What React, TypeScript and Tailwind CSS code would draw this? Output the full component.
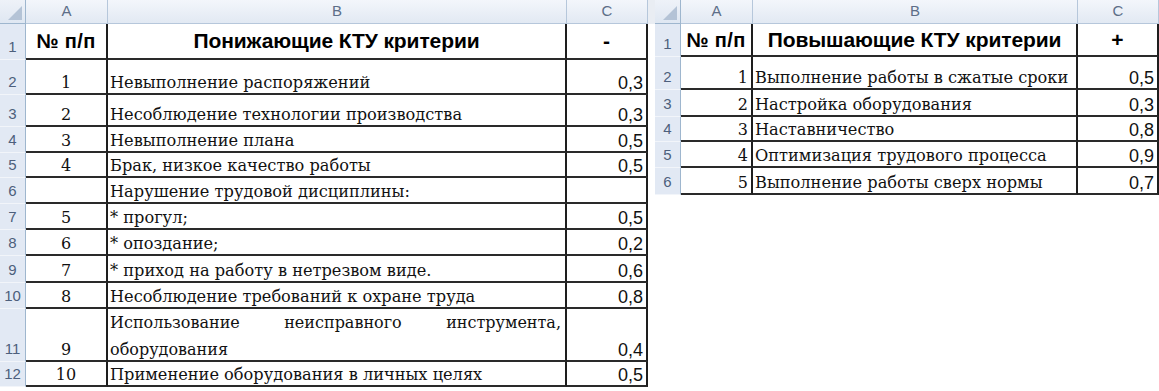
import React from "react";

type Cell = { text?: React.ReactNode; kind: "num" | "text" | "val" | "hdr" | "hnum" | "hsign" | "just"; align?: "left" | "center" | "right" };

const serif = "font-['DejaVu_Serif',serif]";
const sans = "font-['Liberation_Sans',sans-serif]";

function CornerCell() {
  return (
    <div className="relative bg-gradient-to-b from-[#eef2f8] to-[#dfe7f2] border-r border-b border-[#9eb6ce]">
      <svg className="absolute right-[3px] bottom-[3px]" width="14" height="14" viewBox="0 0 14 14">
        <polygon points="14,0 14,14 0,14" fill="#b4c3d6" />
      </svg>
    </div>
  );
}

function ColHeader({ label }: { label: string }) {
  return (
    <div className={`flex items-center justify-center bg-gradient-to-b from-[#f3f6fb] to-[#e2e9f3] border-r border-b border-[#b6c7db] text-[15px] text-[#5d6e88] ${sans}`}>
      {label}
    </div>
  );
}

function RowHeader({ n }: { n: number }) {
  return (
    <div className={`flex items-end justify-center pb-[2px] bg-[#e2e9f4] border-r border-[#9eb6ce] border-b border-b-[#f2f5fa] text-[15px] text-[#4d5f7c] leading-[20px] ${sans}`}>
      {n}
    </div>
  );
}

function DataCell({ cell }: { cell: Cell }) {
  const base = "flex bg-white border-r-2 border-r-[#1e1e1e] border-b-2 border-b-[#2a2a2a] overflow-hidden";
  if (cell.kind === "hdr") {
    return (
      <div className={`${base} items-center justify-center font-bold text-[21px] text-black ${sans} tracking-[-0.1px]`}>
        {cell.text}
      </div>
    );
  }
  if (cell.kind === "hnum") {
    return (
      <div className={`${base} items-center justify-center font-bold text-[20px] text-black ${sans} tracking-[0.4px]`}>
        {cell.text}
      </div>
    );
  }
  if (cell.kind === "hsign") {
    return (
      <div className={`${base} items-center justify-center font-bold text-[21px] text-black ${sans}`}>
        {cell.text}
      </div>
    );
  }
  if (cell.kind === "val") {
    return (
      <div className={`${base} items-end justify-end pr-[3px] text-[18px] leading-[20px] text-[#111] ${sans}`}>
        {cell.text}
      </div>
    );
  }
  if (cell.kind === "num") {
    const j = cell.align === "right" ? "justify-end pr-[3px]" : "justify-center";
    return (
      <div className={`${base} items-end ${j} text-[16px] leading-[20px] text-[#111] ${serif}`}>
        {cell.text}
      </div>
    );
  }
  if (cell.kind === "just") {
    return (
      <div className={`${base} flex-col justify-end pl-[2px] pr-[4px] text-[16px] leading-[27px] text-[#111] ${serif}`}>
        <div className="translate-y-[3px]">{cell.text}</div>
      </div>
    );
  }
  return (
    <div className={`${base} items-end pl-[2px] text-[16.2px] leading-[20px] text-[#111] whitespace-nowrap ${serif}`}>
      {cell.text}
    </div>
  );
}

const leftRows: Cell[][] = [
  [
    { kind: "hnum", text: "№ п/п" },
    { kind: "hdr", text: "Понижающие КТУ критерии" },
    { kind: "hsign", text: "-" },
  ],
  [{ kind: "num", text: "1" }, { kind: "text", text: "Невыполнение распоряжений" }, { kind: "val", text: "0,3" }],
  [{ kind: "num", text: "2" }, { kind: "text", text: "Несоблюдение технологии производства" }, { kind: "val", text: "0,3" }],
  [{ kind: "num", text: "3" }, { kind: "text", text: "Невыполнение плана" }, { kind: "val", text: "0,5" }],
  [{ kind: "num", text: "4" }, { kind: "text", text: "Брак, низкое качество работы" }, { kind: "val", text: "0,5" }],
  [{ kind: "num", text: "" }, { kind: "text", text: "Нарушение трудовой дисциплины:" }, { kind: "val", text: "" }],
  [{ kind: "num", text: "5" }, { kind: "text", text: "* прогул;" }, { kind: "val", text: "0,5" }],
  [{ kind: "num", text: "6" }, { kind: "text", text: "* опоздание;" }, { kind: "val", text: "0,2" }],
  [{ kind: "num", text: "7" }, { kind: "text", text: "* приход на работу в нетрезвом виде." }, { kind: "val", text: "0,6" }],
  [{ kind: "num", text: "8" }, { kind: "text", text: "Несоблюдение требований к охране труда" }, { kind: "val", text: "0,8" }],
  [
    { kind: "num", text: "9" },
    {
      kind: "just",
      text: (
        <>
          <div className="flex justify-between">
            <span>Использование</span>
            <span>неисправного</span>
            <span>инструмента,</span>
          </div>
          <div>оборудования</div>
        </>
      ),
    },
    { kind: "val", text: "0,4" },
  ],
  [{ kind: "num", text: "10" }, { kind: "text", text: "Применение оборудования в личных целях" }, { kind: "val", text: "0,5" }],
];

const rightRows: Cell[][] = [
  [
    { kind: "hnum", text: "№ п/п" },
    { kind: "hdr", text: "Повышающие КТУ критерии" },
    { kind: "hsign", text: "+" },
  ],
  [{ kind: "num", align: "right", text: "1" }, { kind: "text", text: "Выполнение работы в сжатые сроки" }, { kind: "val", text: "0,5" }],
  [{ kind: "num", align: "right", text: "2" }, { kind: "text", text: "Настройка оборудования" }, { kind: "val", text: "0,3" }],
  [{ kind: "num", align: "right", text: "3" }, { kind: "text", text: "Наставничество" }, { kind: "val", text: "0,8" }],
  [{ kind: "num", align: "right", text: "4" }, { kind: "text", text: "Оптимизация трудового процесса" }, { kind: "val", text: "0,9" }],
  [{ kind: "num", align: "right", text: "5" }, { kind: "text", text: "Выполнение работы сверх нормы" }, { kind: "val", text: "0,7" }],
];

function Sheet({ rows, cols, heights }: { rows: Cell[][]; cols: string; heights: string }) {
  return (
    <div className={`grid ${cols} ${heights}`}>
      <CornerCell />
      <ColHeader label="A" />
      <ColHeader label="B" />
      <ColHeader label="C" />
      {rows.map((r, i) => (
        <React.Fragment key={i}>
          <RowHeader n={i + 1} />
          {r.map((c, j) => (
            <DataCell key={j} cell={c} />
          ))}
        </React.Fragment>
      ))}
    </div>
  );
}

export default function App() {
  return (
    <div className="w-[1159px] h-[391px] bg-white flex items-start overflow-hidden">
      <Sheet
        rows={leftRows}
        cols="grid-cols-[26px_82px_459px_81px]"
        heights="grid-rows-[24px_36px_35px_32px_26px_25px_26px_26px_26px_27px_26px_53px_25px]"
      />
      <div className="w-[7px] h-[24px] bg-[#e9edf3]" />
      <Sheet
        rows={rightRows}
        cols="grid-cols-[26px_72px_325px_81px]"
        heights="grid-rows-[24px_33px_33px_27px_25px_26px_27px]"
      />
    </div>
  );
}
